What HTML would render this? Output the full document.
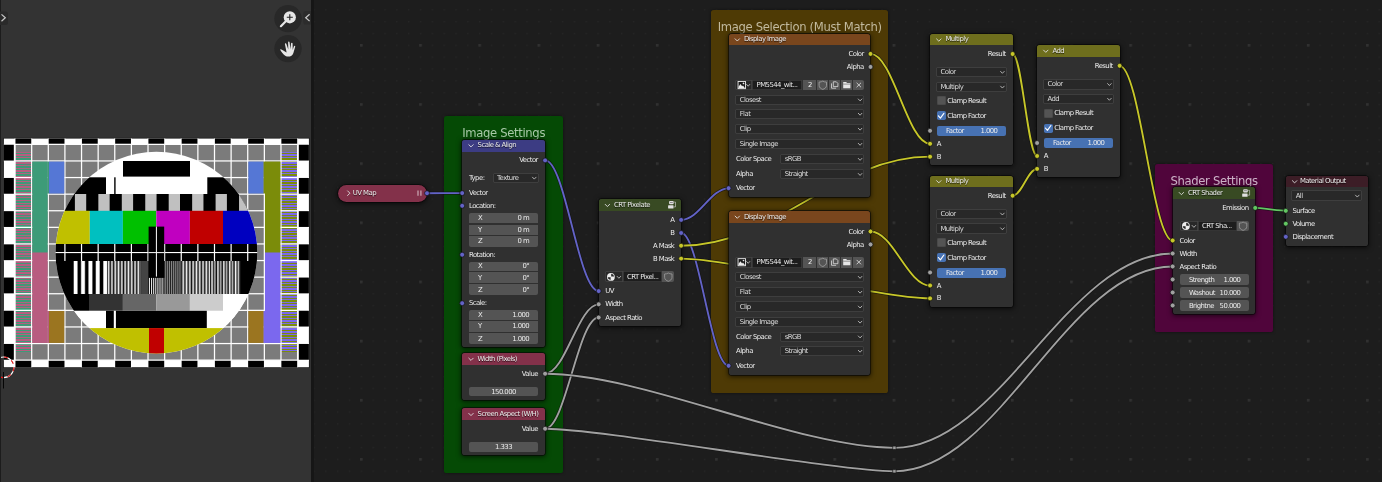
<!DOCTYPE html>
<html><head><meta charset="utf-8"><title>Node Editor</title><style>
html,body{margin:0;padding:0;}
body{width:1382px;height:482px;overflow:hidden;background:#1d1d1d;font-family:"DejaVu Sans","Liberation Sans",sans-serif;}
#root{position:relative;width:1382px;height:482px;overflow:hidden;background:#1d1d1d;}
.t{position:absolute;line-height:10px;white-space:nowrap;}
.b{position:absolute;box-sizing:border-box;}
.n{position:absolute;background:#303030;border-radius:2.6px;box-shadow:0 1px 5px 1px rgba(0,0,0,.62),0 0 0 0.7px rgba(10,10,10,.8);overflow:hidden;}
.h{position:absolute;left:0;top:0;right:0;}
.f{position:absolute;border-radius:2.6px;box-shadow:0 0 3px rgba(0,0,0,.5);}
svg.l{position:absolute;left:0;top:0;}
#nl,#fl{position:absolute;left:0;top:0;width:1382px;height:482px;will-change:transform;}
#left{position:absolute;left:0;top:0;width:311px;height:482px;background:#333333;}
</style></head><body><div id="root">
<svg class="l" width="1382" height="482"><defs>
<pattern id="gm" x="360.65" y="162.95" width="11.836" height="11.83" patternUnits="userSpaceOnUse"><rect width="1.3" height="1.3" fill="#262626"/></pattern>
<pattern id="gM" x="360.00" y="162.30" width="59.18" height="59.15" patternUnits="userSpaceOnUse"><rect width="2.6" height="2.6" fill="#313131"/></pattern>
</defs><rect width="1382" height="482" fill="url(#gm)"/><rect width="1382" height="482" fill="url(#gM)"/></svg>
<div id="fl"><div class="f" style="left:444.30px;top:116.00px;width:118.70px;height:356.70px;background:#054a05;"></div><span class="t" style="left:444.30px;width:118.70px;text-align:center;top:126.20px;line-height:14px;font-size:11.6px;letter-spacing:-0.33px;color:#a9c9a9;">Image Settings</span><div class="f" style="left:711.00px;top:9.60px;width:177.40px;height:383.10px;background:#4e3a05;"></div><span class="t" style="left:711.00px;width:177.40px;text-align:center;top:19.80px;line-height:14px;font-size:11.6px;letter-spacing:-0.33px;color:#c2ba9f;">Image Selection (Must Match)</span><div class="f" style="left:1155.10px;top:163.90px;width:118.10px;height:167.70px;background:#50053b;"></div><span class="t" style="left:1155.10px;width:118.10px;text-align:center;top:173.60px;line-height:14px;font-size:11.6px;letter-spacing:-0.33px;color:#cdb3c8;">Shader Settings</span></div>
<svg class="l" width="1382" height="482"><path d="M427.00 193.20 C427.13 193.20 462.07 193.10 462.20 193.10" stroke="#111" stroke-width="3.2" fill="none" opacity="0.7"/><path d="M427.00 193.20 C427.13 193.20 462.07 193.10 462.20 193.10" stroke="#6363c7" stroke-width="1.85" fill="none"/><path d="M545.10 160.40 C565.47 160.40 578.33 291.10 598.70 291.10" stroke="#111" stroke-width="3.2" fill="none" opacity="0.7"/><path d="M545.10 160.40 C565.47 160.40 578.33 291.10 598.70 291.10" stroke="#6363c7" stroke-width="1.85" fill="none"/><path d="M681.10 219.90 C699.15 219.90 710.55 188.30 728.60 188.30" stroke="#111" stroke-width="3.2" fill="none" opacity="0.7"/><path d="M681.10 219.90 C699.15 219.90 710.55 188.30 728.60 188.30" stroke="#6363c7" stroke-width="1.85" fill="none"/><path d="M681.10 233.00 C699.15 233.00 710.55 365.60 728.60 365.60" stroke="#111" stroke-width="3.2" fill="none" opacity="0.7"/><path d="M681.10 233.00 C699.15 233.00 710.55 365.60 728.60 365.60" stroke="#6363c7" stroke-width="1.85" fill="none"/><path d="M681.10 245.70 C775.72 245.70 835.48 156.70 930.10 156.70" stroke="#111" stroke-width="3.2" fill="none" opacity="0.7"/><path d="M681.10 245.70 C775.72 245.70 835.48 156.70 930.10 156.70" stroke="#c7c729" stroke-width="1.85" fill="none"/><path d="M681.10 258.60 C734.03 258.60 877.17 298.40 930.10 298.40" stroke="#111" stroke-width="3.2" fill="none" opacity="0.7"/><path d="M681.10 258.60 C734.03 258.60 877.17 298.40 930.10 298.40" stroke="#c7c729" stroke-width="1.85" fill="none"/><path d="M870.50 53.90 C893.15 53.90 907.45 143.80 930.10 143.80" stroke="#111" stroke-width="3.2" fill="none" opacity="0.7"/><path d="M870.50 53.90 C893.15 53.90 907.45 143.80 930.10 143.80" stroke="#c7c729" stroke-width="1.85" fill="none"/><path d="M870.50 231.50 C893.15 231.50 907.45 285.50 930.10 285.50" stroke="#111" stroke-width="3.2" fill="none" opacity="0.7"/><path d="M870.50 231.50 C893.15 231.50 907.45 285.50 930.10 285.50" stroke="#c7c729" stroke-width="1.85" fill="none"/><path d="M1012.60 54.00 C1021.91 54.00 1027.79 156.00 1037.10 156.00" stroke="#111" stroke-width="3.2" fill="none" opacity="0.7"/><path d="M1012.60 54.00 C1021.91 54.00 1027.79 156.00 1037.10 156.00" stroke="#c7c729" stroke-width="1.85" fill="none"/><path d="M1012.60 195.70 C1021.91 195.70 1027.79 168.90 1037.10 168.90" stroke="#111" stroke-width="3.2" fill="none" opacity="0.7"/><path d="M1012.60 195.70 C1021.91 195.70 1027.79 168.90 1037.10 168.90" stroke="#c7c729" stroke-width="1.85" fill="none"/><path d="M1119.60 65.80 C1139.78 65.80 1152.52 240.50 1172.70 240.50" stroke="#111" stroke-width="3.2" fill="none" opacity="0.7"/><path d="M1119.60 65.80 C1139.78 65.80 1152.52 240.50 1172.70 240.50" stroke="#c7c729" stroke-width="1.85" fill="none"/><path d="M1255.20 207.90 C1259.06 207.90 1281.94 210.80 1285.80 210.80" stroke="#111" stroke-width="3.2" fill="none" opacity="0.7"/><path d="M1255.20 207.90 C1259.06 207.90 1281.94 210.80 1285.80 210.80" stroke="#63c763" stroke-width="1.85" fill="none"/><path d="M545.10 373.70 C565.47 373.70 578.33 304.30 598.70 304.30" stroke="#111" stroke-width="3.2" fill="none" opacity="0.7"/><path d="M545.10 373.70 C565.47 373.70 578.33 304.30 598.70 304.30" stroke="#a1a1a1" stroke-width="1.85" fill="none"/><path d="M545.10 428.70 C565.47 428.70 578.33 317.50 598.70 317.50" stroke="#111" stroke-width="3.2" fill="none" opacity="0.7"/><path d="M545.10 428.70 C565.47 428.70 578.33 317.50 598.70 317.50" stroke="#a1a1a1" stroke-width="1.85" fill="none"/><path d="M545.10 373.70 C643.65 373.70 795.85 447.80 894.40 447.80" stroke="#111" stroke-width="3.2" fill="none" opacity="0.7"/><path d="M545.10 373.70 C643.65 373.70 795.85 447.80 894.40 447.80" stroke="#a1a1a1" stroke-width="1.85" fill="none"/><path d="M894.40 447.80 C1000.15 447.80 1066.95 253.50 1172.70 253.50" stroke="#111" stroke-width="3.2" fill="none" opacity="0.7"/><path d="M894.40 447.80 C1000.15 447.80 1066.95 253.50 1172.70 253.50" stroke="#a1a1a1" stroke-width="1.85" fill="none"/><path d="M545.10 428.70 C601.76 428.70 837.74 471.30 894.40 471.30" stroke="#111" stroke-width="3.2" fill="none" opacity="0.7"/><path d="M545.10 428.70 C601.76 428.70 837.74 471.30 894.40 471.30" stroke="#a1a1a1" stroke-width="1.85" fill="none"/><path d="M894.40 471.30 C1000.15 471.30 1066.95 266.50 1172.70 266.50" stroke="#111" stroke-width="3.2" fill="none" opacity="0.7"/><path d="M894.40 471.30 C1000.15 471.30 1066.95 266.50 1172.70 266.50" stroke="#a1a1a1" stroke-width="1.85" fill="none"/></svg>
 <div id="nl"><div class="n" style="left:337.8px;top:184.9px;width:89.2px;height:16.8px;border-radius:8.4px;background:#83314a;"></div><span class="t" style="top:188.00px;font-size:6.9px;letter-spacing:-0.55px;color:#ececec;text-shadow:0 0.6px 0.8px rgba(0,0,0,.7);left:352.80px;">UV Map</span><div class="n" style="left:462.40px;top:139.50px;width:82.70px;height:207.50px;"><div class="h" style="height:12px;background:#3c3c83;"></div></div><span class="t" style="top:140.10px;font-size:6.9px;letter-spacing:-0.55px;color:#ececec;text-shadow:0 0.6px 0.8px rgba(0,0,0,.7);left:477.60px;">Scale &amp; Align</span><span class="t" style="top:155.40px;font-size:6.9px;letter-spacing:-0.55px;color:#ececec;right:844.10px;">Vector</span><span class="t" style="top:172.80px;font-size:6.9px;letter-spacing:-0.55px;color:#ececec;left:469.00px;">Type:</span><div class="b" style="left:492.80px;top:172.50px;width:45.80px;height:10.70px;background:#282828;border-radius:2.2px;box-shadow:inset 0 0 0 0.8px #454545;"></div><span class="t" style="top:172.85px;font-size:6.9px;letter-spacing:-0.55px;color:#dddddd;left:497.10px;">Texture</span><span class="t" style="top:188.00px;font-size:6.9px;letter-spacing:-0.55px;color:#ececec;left:469.00px;">Vector</span><span class="t" style="top:200.80px;font-size:6.9px;letter-spacing:-0.55px;color:#ececec;left:469.00px;">Location:</span><div class="b" style="left:468.70px;top:212.90px;width:69.70px;height:10.00px;background:#545454;border-radius:2px 2px 0 0;"></div><span class="t" style="top:212.90px;font-size:6.9px;letter-spacing:-0.55px;color:#ececec;left:477.90px;">X</span><span class="t" style="top:212.90px;font-size:6.9px;letter-spacing:-0.55px;color:#ececec;right:852.80px;">0 m</span><div class="b" style="left:468.70px;top:224.60px;width:69.70px;height:10.20px;background:#545454;border-radius:0;"></div><span class="t" style="top:224.70px;font-size:6.9px;letter-spacing:-0.55px;color:#ececec;left:477.90px;">Y</span><span class="t" style="top:224.70px;font-size:6.9px;letter-spacing:-0.55px;color:#ececec;right:852.80px;">0 m</span><div class="b" style="left:468.70px;top:236.20px;width:69.70px;height:10.50px;background:#545454;border-radius:0 0 2px 2px;"></div><span class="t" style="top:236.45px;font-size:6.9px;letter-spacing:-0.55px;color:#ececec;left:477.90px;">Z</span><span class="t" style="top:236.45px;font-size:6.9px;letter-spacing:-0.55px;color:#ececec;right:852.80px;">0 m</span><span class="t" style="top:249.70px;font-size:6.9px;letter-spacing:-0.55px;color:#ececec;left:469.00px;">Rotation:</span><div class="b" style="left:468.70px;top:261.80px;width:69.70px;height:9.10px;background:#545454;border-radius:2px 2px 0 0;"></div><span class="t" style="top:261.35px;font-size:6.9px;letter-spacing:-0.55px;color:#ececec;left:477.90px;">X</span><span class="t" style="top:261.35px;font-size:6.9px;letter-spacing:-0.55px;color:#ececec;right:852.80px;">0°</span><div class="b" style="left:468.70px;top:272.40px;width:69.70px;height:10.50px;background:#545454;border-radius:0;"></div><span class="t" style="top:272.65px;font-size:6.9px;letter-spacing:-0.55px;color:#ececec;left:477.90px;">Y</span><span class="t" style="top:272.65px;font-size:6.9px;letter-spacing:-0.55px;color:#ececec;right:852.80px;">0°</span><div class="b" style="left:468.70px;top:284.30px;width:69.70px;height:11.00px;background:#545454;border-radius:0 0 2px 2px;"></div><span class="t" style="top:284.80px;font-size:6.9px;letter-spacing:-0.55px;color:#ececec;left:477.90px;">Z</span><span class="t" style="top:284.80px;font-size:6.9px;letter-spacing:-0.55px;color:#ececec;right:852.80px;">0°</span><span class="t" style="top:298.20px;font-size:6.9px;letter-spacing:-0.55px;color:#ececec;left:469.00px;">Scale:</span><div class="b" style="left:468.70px;top:309.70px;width:69.70px;height:9.90px;background:#545454;border-radius:2px 2px 0 0;"></div><span class="t" style="top:309.65px;font-size:6.9px;letter-spacing:-0.55px;color:#ececec;left:477.90px;">X</span><span class="t" style="top:309.65px;font-size:6.9px;letter-spacing:-0.55px;color:#ececec;right:852.80px;">1.000</span><div class="b" style="left:468.70px;top:321.00px;width:69.70px;height:10.70px;background:#545454;border-radius:0;"></div><span class="t" style="top:321.35px;font-size:6.9px;letter-spacing:-0.55px;color:#ececec;left:477.90px;">Y</span><span class="t" style="top:321.35px;font-size:6.9px;letter-spacing:-0.55px;color:#ececec;right:852.80px;">1.000</span><div class="b" style="left:468.70px;top:333.00px;width:69.70px;height:11.20px;background:#545454;border-radius:0 0 2px 2px;"></div><span class="t" style="top:333.60px;font-size:6.9px;letter-spacing:-0.55px;color:#ececec;left:477.90px;">Z</span><span class="t" style="top:333.60px;font-size:6.9px;letter-spacing:-0.55px;color:#ececec;right:852.80px;">1.000</span><div class="n" style="left:462.40px;top:352.80px;width:82.70px;height:47.30px;"><div class="h" style="height:12.4px;background:#83314a;"></div></div><span class="t" style="top:353.60px;font-size:6.9px;letter-spacing:-0.55px;color:#ececec;text-shadow:0 0.6px 0.8px rgba(0,0,0,.7);left:477.60px;">Width (Pixels)</span><span class="t" style="top:368.70px;font-size:6.9px;letter-spacing:-0.55px;color:#ececec;right:844.10px;">Value</span><div class="b" style="left:468.70px;top:386.80px;width:69.70px;height:9.60px;background:#545454;border-radius:2px;"></div><span class="t" style="top:386.60px;font-size:6.9px;letter-spacing:-0.55px;color:#ececec;left:403.55px;width:200px;text-align:center;">150.000</span><div class="n" style="left:462.40px;top:408.10px;width:82.70px;height:46.70px;"><div class="h" style="height:12.2px;background:#83314a;"></div></div><span class="t" style="top:408.80px;font-size:6.9px;letter-spacing:-0.55px;color:#ececec;text-shadow:0 0.6px 0.8px rgba(0,0,0,.7);left:477.60px;">Screen Aspect (W/H)</span><span class="t" style="top:423.70px;font-size:6.9px;letter-spacing:-0.55px;color:#ececec;right:844.10px;">Value</span><div class="b" style="left:468.70px;top:441.80px;width:69.70px;height:10.20px;background:#545454;border-radius:2px;"></div><span class="t" style="top:441.90px;font-size:6.9px;letter-spacing:-0.55px;color:#ececec;left:403.55px;width:200px;text-align:center;">1.333</span><div class="n" style="left:598.80px;top:199.10px;width:82.30px;height:126.50px;"><div class="h" style="height:12.1px;background:#384a23;"></div></div><span class="t" style="top:199.75px;font-size:6.9px;letter-spacing:-0.55px;color:#ececec;text-shadow:0 0.6px 0.8px rgba(0,0,0,.7);left:614.00px;">CRT Pixelate</span><span class="t" style="top:214.90px;font-size:6.9px;letter-spacing:-0.55px;color:#ececec;right:707.70px;">A</span><span class="t" style="top:228.00px;font-size:6.9px;letter-spacing:-0.55px;color:#ececec;right:707.70px;">B</span><span class="t" style="top:240.70px;font-size:6.9px;letter-spacing:-0.55px;color:#ececec;right:707.70px;">A Mask</span><span class="t" style="top:253.60px;font-size:6.9px;letter-spacing:-0.55px;color:#ececec;right:707.70px;">B Mask</span><div class="b" style="left:604.90px;top:271.40px;width:17.90px;height:11.00px;background:#282828;border-radius:2px 0 0 2px;box-shadow:inset 0 0 0 0.8px #454545;"></div><div class="b" style="left:623.10px;top:271.40px;width:39.00px;height:11.00px;background:#1d1d1d;border-radius:0;box-shadow:inset 0 0 0 0.8px #3d3d3d;"></div><div class="b" style="left:662.40px;top:271.40px;width:11.80px;height:11.00px;background:#545454;border-radius:0 2px 2px 0;"></div><span class="t" style="top:271.90px;font-size:6.9px;letter-spacing:-0.55px;color:#ececec;left:627.00px;">CRT Pixel...</span><span class="t" style="top:286.10px;font-size:6.9px;letter-spacing:-0.55px;color:#ececec;left:605.30px;">UV</span><span class="t" style="top:299.30px;font-size:6.9px;letter-spacing:-0.55px;color:#ececec;left:605.30px;">Width</span><span class="t" style="top:312.50px;font-size:6.9px;letter-spacing:-0.55px;color:#ececec;left:605.30px;">Aspect Ratio</span><div class="n" style="left:728.70px;top:33.80px;width:141.80px;height:163.50px;"><div class="h" style="height:11.6px;background:#79461d;"></div></div><span class="t" style="top:34.20px;font-size:6.9px;letter-spacing:-0.55px;color:#ececec;text-shadow:0 0.6px 0.8px rgba(0,0,0,.7);left:743.90px;">Display Image</span><span class="t" style="top:48.90px;font-size:6.9px;letter-spacing:-0.55px;color:#ececec;right:518.30px;">Color</span><span class="t" style="top:61.90px;font-size:6.9px;letter-spacing:-0.55px;color:#ececec;right:518.30px;">Alpha</span><div class="b" style="left:735.40px;top:79.60px;width:16.60px;height:10.80px;background:#282828;border-radius:2px 0 0 2px;box-shadow:inset 0 0 0 0.8px #454545;"></div><div class="b" style="left:752.40px;top:79.60px;width:50.00px;height:10.80px;background:#1d1d1d;border-radius:0;box-shadow:inset 0 0 0 0.8px #3d3d3d;"></div><span class="t" style="top:80.00px;font-size:6.9px;letter-spacing:-0.55px;color:#ececec;left:756.60px;">PM5544_wit...</span><div class="b" style="left:803.00px;top:79.60px;width:13.00px;height:10.80px;background:#545454;border-radius:0;"></div><div class="b" style="left:817.00px;top:79.60px;width:11.00px;height:10.80px;background:#545454;border-radius:0;"></div><div class="b" style="left:829.00px;top:79.60px;width:11.00px;height:10.80px;background:#545454;border-radius:0;"></div><div class="b" style="left:841.00px;top:79.60px;width:11.00px;height:10.80px;background:#545454;border-radius:0;"></div><div class="b" style="left:853.00px;top:79.60px;width:11.00px;height:10.80px;background:#545454;border-radius:0 2px 2px 0;"></div><span class="t" style="top:80.00px;font-size:6.9px;letter-spacing:-0.55px;color:#ececec;left:709.80px;width:200px;text-align:center;">2</span><div class="b" style="left:735.40px;top:94.60px;width:129.00px;height:10.10px;background:#282828;border-radius:2.2px;box-shadow:inset 0 0 0 0.8px #454545;"></div><span class="t" style="top:94.65px;font-size:6.9px;letter-spacing:-0.55px;color:#dddddd;left:739.70px;">Closest</span><div class="b" style="left:735.40px;top:108.70px;width:129.00px;height:10.50px;background:#282828;border-radius:2.2px;box-shadow:inset 0 0 0 0.8px #454545;"></div><span class="t" style="top:108.95px;font-size:6.9px;letter-spacing:-0.55px;color:#dddddd;left:739.70px;">Flat</span><div class="b" style="left:735.40px;top:123.80px;width:129.00px;height:10.20px;background:#282828;border-radius:2.2px;box-shadow:inset 0 0 0 0.8px #454545;"></div><span class="t" style="top:123.90px;font-size:6.9px;letter-spacing:-0.55px;color:#dddddd;left:739.70px;">Clip</span><div class="b" style="left:735.40px;top:138.60px;width:129.00px;height:10.80px;background:#282828;border-radius:2.2px;box-shadow:inset 0 0 0 0.8px #454545;"></div><span class="t" style="top:139.00px;font-size:6.9px;letter-spacing:-0.55px;color:#dddddd;left:739.70px;">Single Image</span><span class="t" style="top:154.05px;font-size:6.9px;letter-spacing:-0.55px;color:#ececec;left:736.00px;">Color Space</span><div class="b" style="left:780.40px;top:153.90px;width:84.00px;height:10.30px;background:#282828;border-radius:2.2px;box-shadow:inset 0 0 0 0.8px #454545;"></div><span class="t" style="top:154.05px;font-size:6.9px;letter-spacing:-0.55px;color:#dddddd;left:784.70px;">sRGB</span><span class="t" style="top:169.15px;font-size:6.9px;letter-spacing:-0.55px;color:#ececec;left:736.00px;">Alpha</span><div class="b" style="left:780.40px;top:168.80px;width:84.00px;height:10.70px;background:#282828;border-radius:2.2px;box-shadow:inset 0 0 0 0.8px #454545;"></div><span class="t" style="top:169.15px;font-size:6.9px;letter-spacing:-0.55px;color:#dddddd;left:784.70px;">Straight</span><span class="t" style="top:183.20px;font-size:6.9px;letter-spacing:-0.55px;color:#ececec;left:736.00px;">Vector</span><div class="n" style="left:728.70px;top:211.10px;width:141.80px;height:163.50px;"><div class="h" style="height:11.6px;background:#79461d;"></div></div><span class="t" style="top:211.50px;font-size:6.9px;letter-spacing:-0.55px;color:#ececec;text-shadow:0 0.6px 0.8px rgba(0,0,0,.7);left:743.90px;">Display Image</span><span class="t" style="top:226.50px;font-size:6.9px;letter-spacing:-0.55px;color:#ececec;right:518.30px;">Color</span><span class="t" style="top:239.50px;font-size:6.9px;letter-spacing:-0.55px;color:#ececec;right:518.30px;">Alpha</span><div class="b" style="left:735.40px;top:256.60px;width:16.60px;height:11.00px;background:#282828;border-radius:2px 0 0 2px;box-shadow:inset 0 0 0 0.8px #454545;"></div><div class="b" style="left:752.40px;top:256.60px;width:50.00px;height:11.00px;background:#1d1d1d;border-radius:0;box-shadow:inset 0 0 0 0.8px #3d3d3d;"></div><span class="t" style="top:257.10px;font-size:6.9px;letter-spacing:-0.55px;color:#ececec;left:756.60px;">PM5544_wit...</span><div class="b" style="left:803.00px;top:256.60px;width:13.00px;height:11.00px;background:#545454;border-radius:0;"></div><div class="b" style="left:817.00px;top:256.60px;width:11.00px;height:11.00px;background:#545454;border-radius:0;"></div><div class="b" style="left:829.00px;top:256.60px;width:11.00px;height:11.00px;background:#545454;border-radius:0;"></div><div class="b" style="left:841.00px;top:256.60px;width:11.00px;height:11.00px;background:#545454;border-radius:0;"></div><div class="b" style="left:853.00px;top:256.60px;width:11.00px;height:11.00px;background:#545454;border-radius:0 2px 2px 0;"></div><span class="t" style="top:257.10px;font-size:6.9px;letter-spacing:-0.55px;color:#ececec;left:709.80px;width:200px;text-align:center;">2</span><div class="b" style="left:735.40px;top:271.90px;width:129.00px;height:10.30px;background:#282828;border-radius:2.2px;box-shadow:inset 0 0 0 0.8px #454545;"></div><span class="t" style="top:272.05px;font-size:6.9px;letter-spacing:-0.55px;color:#dddddd;left:739.70px;">Closest</span><div class="b" style="left:735.40px;top:286.80px;width:129.00px;height:10.20px;background:#282828;border-radius:2.2px;box-shadow:inset 0 0 0 0.8px #454545;"></div><span class="t" style="top:286.90px;font-size:6.9px;letter-spacing:-0.55px;color:#dddddd;left:739.70px;">Flat</span><div class="b" style="left:735.40px;top:301.40px;width:129.00px;height:10.70px;background:#282828;border-radius:2.2px;box-shadow:inset 0 0 0 0.8px #454545;"></div><span class="t" style="top:301.75px;font-size:6.9px;letter-spacing:-0.55px;color:#dddddd;left:739.70px;">Clip</span><div class="b" style="left:735.40px;top:316.70px;width:129.00px;height:10.30px;background:#282828;border-radius:2.2px;box-shadow:inset 0 0 0 0.8px #454545;"></div><span class="t" style="top:316.85px;font-size:6.9px;letter-spacing:-0.55px;color:#dddddd;left:739.70px;">Single Image</span><span class="t" style="top:331.65px;font-size:6.9px;letter-spacing:-0.55px;color:#ececec;left:736.00px;">Color Space</span><div class="b" style="left:780.40px;top:331.50px;width:84.00px;height:10.30px;background:#282828;border-radius:2.2px;box-shadow:inset 0 0 0 0.8px #454545;"></div><span class="t" style="top:331.65px;font-size:6.9px;letter-spacing:-0.55px;color:#dddddd;left:784.70px;">sRGB</span><span class="t" style="top:345.95px;font-size:6.9px;letter-spacing:-0.55px;color:#ececec;left:736.00px;">Alpha</span><div class="b" style="left:780.40px;top:345.70px;width:84.00px;height:10.50px;background:#282828;border-radius:2.2px;box-shadow:inset 0 0 0 0.8px #454545;"></div><span class="t" style="top:345.95px;font-size:6.9px;letter-spacing:-0.55px;color:#dddddd;left:784.70px;">Straight</span><span class="t" style="top:360.80px;font-size:6.9px;letter-spacing:-0.55px;color:#ececec;left:736.00px;">Vector</span><div class="n" style="left:930.20px;top:34.10px;width:82.40px;height:131.20px;"><div class="h" style="height:11.3px;background:#6e6e1d;"></div></div><span class="t" style="top:34.35px;font-size:6.9px;letter-spacing:-0.55px;color:#ececec;text-shadow:0 0.6px 0.8px rgba(0,0,0,.7);left:945.40px;">Multiply</span><span class="t" style="top:49.00px;font-size:6.9px;letter-spacing:-0.55px;color:#ececec;right:376.30px;">Result</span><div class="b" style="left:936.10px;top:66.80px;width:70.60px;height:10.50px;background:#282828;border-radius:2.2px;box-shadow:inset 0 0 0 0.8px #454545;"></div><span class="t" style="top:67.05px;font-size:6.9px;letter-spacing:-0.55px;color:#dddddd;left:940.40px;">Color</span><div class="b" style="left:936.10px;top:81.70px;width:70.60px;height:10.20px;background:#282828;border-radius:2.2px;box-shadow:inset 0 0 0 0.8px #454545;"></div><span class="t" style="top:81.80px;font-size:6.9px;letter-spacing:-0.55px;color:#dddddd;left:940.40px;">Multiply</span><div class="b" style="left:936.50px;top:96.40px;width:9.00px;height:9.00px;background:#545454;border-radius:1.8px;box-shadow:inset 0 0 0 0.8px #484848;"></div><span class="t" style="top:96.00px;font-size:6.9px;letter-spacing:-0.55px;color:#ececec;left:947.20px;">Clamp Result</span><div class="b" style="left:936.50px;top:111.30px;width:9.00px;height:9.00px;background:#4772b3;border-radius:1.8px;"></div><span class="t" style="top:110.90px;font-size:6.9px;letter-spacing:-0.55px;color:#ececec;left:947.20px;">Clamp Factor</span><div class="b" style="left:936.50px;top:126.10px;width:69.80px;height:9.90px;background:#4772b3;border-radius:2px;"></div><span class="t" style="top:126.05px;font-size:6.9px;letter-spacing:-0.55px;color:#ececec;left:946.10px;">Factor</span><span class="t" style="top:126.05px;font-size:6.9px;letter-spacing:-0.55px;color:#ececec;right:384.60px;">1.000</span><span class="t" style="top:138.80px;font-size:6.9px;letter-spacing:-0.55px;color:#ececec;left:936.80px;">A</span><span class="t" style="top:151.70px;font-size:6.9px;letter-spacing:-0.55px;color:#ececec;left:936.80px;">B</span><div class="n" style="left:930.20px;top:175.80px;width:82.40px;height:131.20px;"><div class="h" style="height:11.3px;background:#6e6e1d;"></div></div><span class="t" style="top:176.05px;font-size:6.9px;letter-spacing:-0.55px;color:#ececec;text-shadow:0 0.6px 0.8px rgba(0,0,0,.7);left:945.40px;">Multiply</span><span class="t" style="top:190.70px;font-size:6.9px;letter-spacing:-0.55px;color:#ececec;right:376.30px;">Result</span><div class="b" style="left:936.10px;top:208.50px;width:70.60px;height:10.50px;background:#282828;border-radius:2.2px;box-shadow:inset 0 0 0 0.8px #454545;"></div><span class="t" style="top:208.75px;font-size:6.9px;letter-spacing:-0.55px;color:#dddddd;left:940.40px;">Color</span><div class="b" style="left:936.10px;top:223.40px;width:70.60px;height:10.20px;background:#282828;border-radius:2.2px;box-shadow:inset 0 0 0 0.8px #454545;"></div><span class="t" style="top:223.50px;font-size:6.9px;letter-spacing:-0.55px;color:#dddddd;left:940.40px;">Multiply</span><div class="b" style="left:936.50px;top:238.10px;width:9.00px;height:9.00px;background:#545454;border-radius:1.8px;box-shadow:inset 0 0 0 0.8px #484848;"></div><span class="t" style="top:237.70px;font-size:6.9px;letter-spacing:-0.55px;color:#ececec;left:947.20px;">Clamp Result</span><div class="b" style="left:936.50px;top:253.00px;width:9.00px;height:9.00px;background:#4772b3;border-radius:1.8px;"></div><span class="t" style="top:252.60px;font-size:6.9px;letter-spacing:-0.55px;color:#ececec;left:947.20px;">Clamp Factor</span><div class="b" style="left:936.50px;top:267.80px;width:69.80px;height:9.90px;background:#4772b3;border-radius:2px;"></div><span class="t" style="top:267.75px;font-size:6.9px;letter-spacing:-0.55px;color:#ececec;left:946.10px;">Factor</span><span class="t" style="top:267.75px;font-size:6.9px;letter-spacing:-0.55px;color:#ececec;right:384.60px;">1.000</span><span class="t" style="top:280.50px;font-size:6.9px;letter-spacing:-0.55px;color:#ececec;left:936.80px;">A</span><span class="t" style="top:293.40px;font-size:6.9px;letter-spacing:-0.55px;color:#ececec;left:936.80px;">B</span><div class="n" style="left:1037.20px;top:45.30px;width:82.40px;height:132.20px;"><div class="h" style="height:11.3px;background:#6e6e1d;"></div></div><span class="t" style="top:45.55px;font-size:6.9px;letter-spacing:-0.55px;color:#ececec;text-shadow:0 0.6px 0.8px rgba(0,0,0,.7);left:1052.40px;">Add</span><span class="t" style="top:60.80px;font-size:6.9px;letter-spacing:-0.55px;color:#ececec;right:269.30px;">Result</span><div class="b" style="left:1043.10px;top:79.00px;width:70.60px;height:10.50px;background:#282828;border-radius:2.2px;box-shadow:inset 0 0 0 0.8px #454545;"></div><span class="t" style="top:79.25px;font-size:6.9px;letter-spacing:-0.55px;color:#dddddd;left:1047.40px;">Color</span><div class="b" style="left:1043.10px;top:93.90px;width:70.60px;height:10.20px;background:#282828;border-radius:2.2px;box-shadow:inset 0 0 0 0.8px #454545;"></div><span class="t" style="top:94.00px;font-size:6.9px;letter-spacing:-0.55px;color:#dddddd;left:1047.40px;">Add</span><div class="b" style="left:1043.50px;top:108.60px;width:9.00px;height:9.00px;background:#545454;border-radius:1.8px;box-shadow:inset 0 0 0 0.8px #484848;"></div><span class="t" style="top:108.20px;font-size:6.9px;letter-spacing:-0.55px;color:#ececec;left:1054.20px;">Clamp Result</span><div class="b" style="left:1043.50px;top:123.50px;width:9.00px;height:9.00px;background:#4772b3;border-radius:1.8px;"></div><span class="t" style="top:123.10px;font-size:6.9px;letter-spacing:-0.55px;color:#ececec;left:1054.20px;">Clamp Factor</span><div class="b" style="left:1043.50px;top:138.30px;width:69.80px;height:9.90px;background:#4772b3;border-radius:2px;"></div><span class="t" style="top:138.25px;font-size:6.9px;letter-spacing:-0.55px;color:#ececec;left:1053.10px;">Factor</span><span class="t" style="top:138.25px;font-size:6.9px;letter-spacing:-0.55px;color:#ececec;right:277.60px;">1.000</span><span class="t" style="top:151.00px;font-size:6.9px;letter-spacing:-0.55px;color:#ececec;left:1043.80px;">A</span><span class="t" style="top:163.90px;font-size:6.9px;letter-spacing:-0.55px;color:#ececec;left:1043.80px;">B</span><div class="n" style="left:1172.80px;top:187.40px;width:82.40px;height:126.70px;"><div class="h" style="height:11.8px;background:#384a23;"></div></div><span class="t" style="top:187.90px;font-size:6.9px;letter-spacing:-0.55px;color:#ececec;text-shadow:0 0.6px 0.8px rgba(0,0,0,.7);left:1188.00px;">CRT Shader</span><span class="t" style="top:202.90px;font-size:6.9px;letter-spacing:-0.55px;color:#ececec;right:133.50px;">Emission</span><div class="b" style="left:1179.90px;top:220.60px;width:17.90px;height:10.80px;background:#282828;border-radius:2px 0 0 2px;box-shadow:inset 0 0 0 0.8px #454545;"></div><div class="b" style="left:1198.10px;top:220.60px;width:38.80px;height:10.80px;background:#1d1d1d;border-radius:0;box-shadow:inset 0 0 0 0.8px #3d3d3d;"></div><div class="b" style="left:1237.20px;top:220.60px;width:11.80px;height:10.80px;background:#545454;border-radius:0 2px 2px 0;"></div><span class="t" style="top:221.00px;font-size:6.9px;letter-spacing:-0.55px;color:#ececec;left:1202.00px;">CRT Sha...</span><span class="t" style="top:235.50px;font-size:6.9px;letter-spacing:-0.55px;color:#ececec;left:1179.60px;">Color</span><span class="t" style="top:248.50px;font-size:6.9px;letter-spacing:-0.55px;color:#ececec;left:1179.60px;">Width</span><span class="t" style="top:261.50px;font-size:6.9px;letter-spacing:-0.55px;color:#ececec;left:1179.60px;">Aspect Ratio</span><div class="b" style="left:1180.00px;top:274.40px;width:69.10px;height:11.00px;background:#545454;border-radius:2px;"></div><span class="t" style="top:274.90px;font-size:6.9px;letter-spacing:-0.55px;color:#ececec;left:1188.90px;">Strength</span><span class="t" style="top:274.90px;font-size:6.9px;letter-spacing:-0.55px;color:#ececec;right:141.60px;">1.000</span><div class="b" style="left:1180.00px;top:287.40px;width:69.10px;height:11.00px;background:#545454;border-radius:2px;"></div><span class="t" style="top:287.90px;font-size:6.9px;letter-spacing:-0.55px;color:#ececec;left:1188.90px;">Washout</span><span class="t" style="top:287.90px;font-size:6.9px;letter-spacing:-0.55px;color:#ececec;right:141.60px;">10.000</span><div class="b" style="left:1180.00px;top:300.40px;width:69.10px;height:11.00px;background:#545454;border-radius:2px;"></div><span class="t" style="top:300.90px;font-size:6.9px;letter-spacing:-0.55px;color:#ececec;left:1188.90px;">Brightne</span><span class="t" style="top:300.90px;font-size:6.9px;letter-spacing:-0.55px;color:#ececec;right:141.60px;">50.000</span><div class="n" style="left:1286.00px;top:175.70px;width:82.40px;height:70.80px;"><div class="h" style="height:11.6px;background:#3c1d26;"></div></div><span class="t" style="top:176.10px;font-size:6.9px;letter-spacing:-0.55px;color:#ececec;text-shadow:0 0.6px 0.8px rgba(0,0,0,.7);left:1299.90px;">Material Output</span><div class="b" style="left:1291.40px;top:190.30px;width:70.20px;height:11.00px;background:#282828;border-radius:2.2px;box-shadow:inset 0 0 0 0.8px #454545;"></div><span class="t" style="top:190.80px;font-size:6.9px;letter-spacing:-0.55px;color:#dddddd;left:1295.70px;">All</span><span class="t" style="top:205.80px;font-size:6.9px;letter-spacing:-0.55px;color:#ececec;left:1292.40px;">Surface</span><span class="t" style="top:218.70px;font-size:6.9px;letter-spacing:-0.55px;color:#ececec;left:1292.40px;">Volume</span><span class="t" style="top:231.80px;font-size:6.9px;letter-spacing:-0.55px;color:#ececec;left:1292.40px;">Displacement</span></div>
<svg class="l" width="1382" height="482"><path d="M347.6 190.9 L349.9 193.2 L347.6 195.5" fill="none" stroke="#e0e0e0" stroke-width="0.9" stroke-linecap="round" stroke-linejoin="round"/><path d="M418.0 190.6V195.8M420.9 190.6V195.8" stroke="#c199a6" stroke-width="1.4"/><path d="M468.80 144.70 L471.00 146.90 L473.20 144.70" fill="none" stroke="#e0e0e0" stroke-width="0.9" stroke-linecap="round" stroke-linejoin="round"/><path d="M532.50 177.20 L534.30 179.10 L536.10 177.20" fill="none" stroke="#d0d0d0" stroke-width="0.8" stroke-linecap="round" stroke-linejoin="round"/><path d="M468.80 358.20 L471.00 360.40 L473.20 358.20" fill="none" stroke="#e0e0e0" stroke-width="0.9" stroke-linecap="round" stroke-linejoin="round"/><path d="M468.80 413.40 L471.00 415.60 L473.20 413.40" fill="none" stroke="#e0e0e0" stroke-width="0.9" stroke-linecap="round" stroke-linejoin="round"/><path d="M605.20 204.35 L607.40 206.55 L609.60 204.35" fill="none" stroke="#e0e0e0" stroke-width="0.9" stroke-linecap="round" stroke-linejoin="round"/><g transform="translate(667.90,201.30)" fill="#e0e0e0"><rect x="1.2" y="-0.4" width="4.6" height="3.3" rx="0.9"/><rect x="2.1" y="0.9" width="2.8" height="0.6" fill="#555"/><rect x="0.2" y="3.9" width="5.4" height="3.2" rx="0.5"/><path d="M6.2 0.8H7.6V5.6H5.8" fill="none" stroke="#d8d8d8" stroke-width="0.6"/></g><g><circle cx="610.90" cy="276.90" r="3.9" fill="#ececec"/><path d="M611.20 276.60 L611.20 273.70 A3.2 3.2 0 0 1 614.10 276.60Z M610.60 277.20 L610.60 280.10 A3.2 3.2 0 0 1 607.70 277.20Z" fill="#252525"/></g><path d="M617.10 276.35 L618.90 278.25 L620.70 276.35" fill="none" stroke="#d0d0d0" stroke-width="0.8" stroke-linecap="round" stroke-linejoin="round"/><path d="M664.60 274.00 Q666.90 274.00 668.30 273.00 Q669.70 274.00 672.00 274.00 V277.30 C672.00 279.60 670.10 280.60 668.30 281.30 C666.50 280.60 664.60 279.60 664.60 277.30Z" fill="none" stroke="#9a9a9a" stroke-width="0.85"/><path d="M735.10 38.80 L737.30 41.00 L739.50 38.80" fill="none" stroke="#e0e0e0" stroke-width="0.9" stroke-linecap="round" stroke-linejoin="round"/><g transform="translate(737.60,81.10)"><rect x="0.45" y="0.45" width="7.4" height="7.1" fill="#1a1a1a" stroke="#ececec" stroke-width="0.9"/><path d="M0.9 7.1 L0.9 5.6 L2.9 3.0 L4.5 5.2 L5.4 4.3 L7.4 7.1Z" fill="#ececec"/><circle cx="5.9" cy="2.3" r="0.85" fill="#ececec"/></g><path d="M746.60 84.40 L748.20 86.20 L749.80 84.40" fill="none" stroke="#d0d0d0" stroke-width="0.8" stroke-linecap="round" stroke-linejoin="round"/><path d="M819.10 82.10 Q821.40 82.10 822.80 81.10 Q824.20 82.10 826.50 82.10 V85.40 C826.50 87.70 824.60 88.70 822.80 89.40 C821.00 88.70 819.10 87.70 819.10 85.40Z" fill="none" stroke="#a0a0a0" stroke-width="0.85"/><g fill="none" stroke="#e0e0e0" stroke-width="0.8"><path d="M831.50 83.40 V88.20 H836.10"/><path d="M833.30 81.80 H836.30 L837.90 83.40 V86.60 H833.30Z"/></g><path d="M843.20 82.00 H846.20 L847.00 83.00 H850.40 V88.20 H843.20Z" fill="#e6e6e6"/><path d="M843.20 84.10 H850.40" stroke="#545454" stroke-width="0.6"/><path d="M856.60 82.80 L861.00 87.20 M861.00 82.80 L856.60 87.20" stroke="#d8d8d8" stroke-width="0.9"/><path d="M858.30 99.00 L860.10 100.90 L861.90 99.00" fill="none" stroke="#d0d0d0" stroke-width="0.8" stroke-linecap="round" stroke-linejoin="round"/><path d="M858.30 113.30 L860.10 115.20 L861.90 113.30" fill="none" stroke="#d0d0d0" stroke-width="0.8" stroke-linecap="round" stroke-linejoin="round"/><path d="M858.30 128.25 L860.10 130.15 L861.90 128.25" fill="none" stroke="#d0d0d0" stroke-width="0.8" stroke-linecap="round" stroke-linejoin="round"/><path d="M858.30 143.35 L860.10 145.25 L861.90 143.35" fill="none" stroke="#d0d0d0" stroke-width="0.8" stroke-linecap="round" stroke-linejoin="round"/><path d="M858.30 158.40 L860.10 160.30 L861.90 158.40" fill="none" stroke="#d0d0d0" stroke-width="0.8" stroke-linecap="round" stroke-linejoin="round"/><path d="M858.30 173.50 L860.10 175.40 L861.90 173.50" fill="none" stroke="#d0d0d0" stroke-width="0.8" stroke-linecap="round" stroke-linejoin="round"/><path d="M735.10 216.10 L737.30 218.30 L739.50 216.10" fill="none" stroke="#e0e0e0" stroke-width="0.9" stroke-linecap="round" stroke-linejoin="round"/><g transform="translate(737.60,258.20)"><rect x="0.45" y="0.45" width="7.4" height="7.1" fill="#1a1a1a" stroke="#ececec" stroke-width="0.9"/><path d="M0.9 7.1 L0.9 5.6 L2.9 3.0 L4.5 5.2 L5.4 4.3 L7.4 7.1Z" fill="#ececec"/><circle cx="5.9" cy="2.3" r="0.85" fill="#ececec"/></g><path d="M746.60 261.50 L748.20 263.30 L749.80 261.50" fill="none" stroke="#d0d0d0" stroke-width="0.8" stroke-linecap="round" stroke-linejoin="round"/><path d="M819.10 259.20 Q821.40 259.20 822.80 258.20 Q824.20 259.20 826.50 259.20 V262.50 C826.50 264.80 824.60 265.80 822.80 266.50 C821.00 265.80 819.10 264.80 819.10 262.50Z" fill="none" stroke="#a0a0a0" stroke-width="0.85"/><g fill="none" stroke="#e0e0e0" stroke-width="0.8"><path d="M831.50 260.50 V265.30 H836.10"/><path d="M833.30 258.90 H836.30 L837.90 260.50 V263.70 H833.30Z"/></g><path d="M843.20 259.10 H846.20 L847.00 260.10 H850.40 V265.30 H843.20Z" fill="#e6e6e6"/><path d="M843.20 261.20 H850.40" stroke="#545454" stroke-width="0.6"/><path d="M856.60 259.90 L861.00 264.30 M861.00 259.90 L856.60 264.30" stroke="#d8d8d8" stroke-width="0.9"/><path d="M858.30 276.40 L860.10 278.30 L861.90 276.40" fill="none" stroke="#d0d0d0" stroke-width="0.8" stroke-linecap="round" stroke-linejoin="round"/><path d="M858.30 291.25 L860.10 293.15 L861.90 291.25" fill="none" stroke="#d0d0d0" stroke-width="0.8" stroke-linecap="round" stroke-linejoin="round"/><path d="M858.30 306.10 L860.10 308.00 L861.90 306.10" fill="none" stroke="#d0d0d0" stroke-width="0.8" stroke-linecap="round" stroke-linejoin="round"/><path d="M858.30 321.20 L860.10 323.10 L861.90 321.20" fill="none" stroke="#d0d0d0" stroke-width="0.8" stroke-linecap="round" stroke-linejoin="round"/><path d="M858.30 336.00 L860.10 337.90 L861.90 336.00" fill="none" stroke="#d0d0d0" stroke-width="0.8" stroke-linecap="round" stroke-linejoin="round"/><path d="M858.30 350.30 L860.10 352.20 L861.90 350.30" fill="none" stroke="#d0d0d0" stroke-width="0.8" stroke-linecap="round" stroke-linejoin="round"/><path d="M936.60 38.95 L938.80 41.15 L941.00 38.95" fill="none" stroke="#e0e0e0" stroke-width="0.9" stroke-linecap="round" stroke-linejoin="round"/><path d="M1000.60 71.40 L1002.40 73.30 L1004.20 71.40" fill="none" stroke="#d0d0d0" stroke-width="0.8" stroke-linecap="round" stroke-linejoin="round"/><path d="M1000.60 86.15 L1002.40 88.05 L1004.20 86.15" fill="none" stroke="#d0d0d0" stroke-width="0.8" stroke-linecap="round" stroke-linejoin="round"/><path d="M938.40 115.80 L940.40 118.20 L943.90 113.30" fill="none" stroke="#fff" stroke-width="1.15" stroke-linecap="round" stroke-linejoin="round"/><path d="M936.60 180.65 L938.80 182.85 L941.00 180.65" fill="none" stroke="#e0e0e0" stroke-width="0.9" stroke-linecap="round" stroke-linejoin="round"/><path d="M1000.60 213.10 L1002.40 215.00 L1004.20 213.10" fill="none" stroke="#d0d0d0" stroke-width="0.8" stroke-linecap="round" stroke-linejoin="round"/><path d="M1000.60 227.85 L1002.40 229.75 L1004.20 227.85" fill="none" stroke="#d0d0d0" stroke-width="0.8" stroke-linecap="round" stroke-linejoin="round"/><path d="M938.40 257.50 L940.40 259.90 L943.90 255.00" fill="none" stroke="#fff" stroke-width="1.15" stroke-linecap="round" stroke-linejoin="round"/><path d="M1043.60 50.15 L1045.80 52.35 L1048.00 50.15" fill="none" stroke="#e0e0e0" stroke-width="0.9" stroke-linecap="round" stroke-linejoin="round"/><path d="M1107.60 83.60 L1109.40 85.50 L1111.20 83.60" fill="none" stroke="#d0d0d0" stroke-width="0.8" stroke-linecap="round" stroke-linejoin="round"/><path d="M1107.60 98.35 L1109.40 100.25 L1111.20 98.35" fill="none" stroke="#d0d0d0" stroke-width="0.8" stroke-linecap="round" stroke-linejoin="round"/><path d="M1045.40 128.00 L1047.40 130.40 L1050.90 125.50" fill="none" stroke="#fff" stroke-width="1.15" stroke-linecap="round" stroke-linejoin="round"/><path d="M1179.20 192.50 L1181.40 194.70 L1183.60 192.50" fill="none" stroke="#e0e0e0" stroke-width="0.9" stroke-linecap="round" stroke-linejoin="round"/><g transform="translate(1242.00,189.60)" fill="#e0e0e0"><rect x="1.2" y="-0.4" width="4.6" height="3.3" rx="0.9"/><rect x="2.1" y="0.9" width="2.8" height="0.6" fill="#555"/><rect x="0.2" y="3.9" width="5.4" height="3.2" rx="0.5"/><path d="M6.2 0.8H7.6V5.6H5.8" fill="none" stroke="#d8d8d8" stroke-width="0.6"/></g><g><circle cx="1185.90" cy="226.00" r="3.9" fill="#ececec"/><path d="M1186.20 225.70 L1186.20 222.80 A3.2 3.2 0 0 1 1189.10 225.70Z M1185.60 226.30 L1185.60 229.20 A3.2 3.2 0 0 1 1182.70 226.30Z" fill="#252525"/></g><path d="M1192.10 225.45 L1193.90 227.35 L1195.70 225.45" fill="none" stroke="#d0d0d0" stroke-width="0.8" stroke-linecap="round" stroke-linejoin="round"/><path d="M1239.40 223.10 Q1241.70 223.10 1243.10 222.10 Q1244.50 223.10 1246.80 223.10 V226.40 C1246.80 228.70 1244.90 229.70 1243.10 230.40 C1241.30 229.70 1239.40 228.70 1239.40 226.40Z" fill="none" stroke="#9a9a9a" stroke-width="0.85"/><path d="M1292.40 180.70 L1294.60 182.90 L1296.80 180.70" fill="none" stroke="#e0e0e0" stroke-width="0.9" stroke-linecap="round" stroke-linejoin="round"/><path d="M1355.50 195.15 L1357.30 197.05 L1359.10 195.15" fill="none" stroke="#d0d0d0" stroke-width="0.8" stroke-linecap="round" stroke-linejoin="round"/><circle cx="427.00" cy="193.20" r="2.45" fill="#6363c7" stroke="#141414" stroke-width="0.7"/><circle cx="545.10" cy="160.40" r="2.45" fill="#6363c7" stroke="#141414" stroke-width="0.7"/><circle cx="462.20" cy="193.10" r="2.45" fill="#6363c7" stroke="#141414" stroke-width="0.7"/><circle cx="462.20" cy="205.80" r="2.45" fill="#6363c7" stroke="#141414" stroke-width="0.7"/><circle cx="462.20" cy="254.70" r="2.45" fill="#6363c7" stroke="#141414" stroke-width="0.7"/><circle cx="462.20" cy="303.20" r="2.45" fill="#6363c7" stroke="#141414" stroke-width="0.7"/><circle cx="545.10" cy="373.70" r="2.45" fill="#a1a1a1" stroke="#141414" stroke-width="0.7"/><circle cx="545.10" cy="428.70" r="2.45" fill="#a1a1a1" stroke="#141414" stroke-width="0.7"/><circle cx="681.10" cy="219.90" r="2.45" fill="#6363c7" stroke="#141414" stroke-width="0.7"/><circle cx="681.10" cy="233.00" r="2.45" fill="#6363c7" stroke="#141414" stroke-width="0.7"/><circle cx="681.10" cy="245.70" r="2.45" fill="#c7c729" stroke="#141414" stroke-width="0.7"/><circle cx="681.10" cy="258.60" r="2.45" fill="#c7c729" stroke="#141414" stroke-width="0.7"/><circle cx="598.70" cy="291.10" r="2.45" fill="#6363c7" stroke="#141414" stroke-width="0.7"/><circle cx="598.70" cy="304.30" r="2.45" fill="#a1a1a1" stroke="#141414" stroke-width="0.7"/><circle cx="598.70" cy="317.50" r="2.45" fill="#a1a1a1" stroke="#141414" stroke-width="0.7"/><circle cx="870.50" cy="53.90" r="2.45" fill="#c7c729" stroke="#141414" stroke-width="0.7"/><circle cx="870.50" cy="66.90" r="2.45" fill="#a1a1a1" stroke="#141414" stroke-width="0.7"/><circle cx="728.60" cy="188.20" r="2.45" fill="#6363c7" stroke="#141414" stroke-width="0.7"/><circle cx="870.50" cy="231.50" r="2.45" fill="#c7c729" stroke="#141414" stroke-width="0.7"/><circle cx="870.50" cy="244.50" r="2.45" fill="#a1a1a1" stroke="#141414" stroke-width="0.7"/><circle cx="728.60" cy="365.80" r="2.45" fill="#6363c7" stroke="#141414" stroke-width="0.7"/><circle cx="1012.60" cy="54.00" r="2.45" fill="#c7c729" stroke="#141414" stroke-width="0.7"/><circle cx="930.10" cy="130.80" r="2.45" fill="#a1a1a1" stroke="#141414" stroke-width="0.7"/><circle cx="930.10" cy="143.80" r="2.45" fill="#c7c729" stroke="#141414" stroke-width="0.7"/><circle cx="930.10" cy="156.70" r="2.45" fill="#c7c729" stroke="#141414" stroke-width="0.7"/><circle cx="1012.60" cy="195.70" r="2.45" fill="#c7c729" stroke="#141414" stroke-width="0.7"/><circle cx="930.10" cy="272.50" r="2.45" fill="#a1a1a1" stroke="#141414" stroke-width="0.7"/><circle cx="930.10" cy="285.50" r="2.45" fill="#c7c729" stroke="#141414" stroke-width="0.7"/><circle cx="930.10" cy="298.40" r="2.45" fill="#c7c729" stroke="#141414" stroke-width="0.7"/><circle cx="1119.60" cy="65.80" r="2.45" fill="#c7c729" stroke="#141414" stroke-width="0.7"/><circle cx="1037.10" cy="143.00" r="2.45" fill="#a1a1a1" stroke="#141414" stroke-width="0.7"/><circle cx="1037.10" cy="156.00" r="2.45" fill="#c7c729" stroke="#141414" stroke-width="0.7"/><circle cx="1037.10" cy="168.90" r="2.45" fill="#c7c729" stroke="#141414" stroke-width="0.7"/><circle cx="1255.20" cy="207.90" r="2.45" fill="#63c763" stroke="#141414" stroke-width="0.7"/><circle cx="1172.70" cy="240.50" r="2.45" fill="#c7c729" stroke="#141414" stroke-width="0.7"/><circle cx="1172.70" cy="253.50" r="2.45" fill="#a1a1a1" stroke="#141414" stroke-width="0.7"/><circle cx="1172.70" cy="266.50" r="2.45" fill="#a1a1a1" stroke="#141414" stroke-width="0.7"/><circle cx="1172.70" cy="279.50" r="2.45" fill="#a1a1a1" stroke="#141414" stroke-width="0.7"/><circle cx="1172.70" cy="292.50" r="2.45" fill="#a1a1a1" stroke="#141414" stroke-width="0.7"/><circle cx="1172.70" cy="305.50" r="2.45" fill="#a1a1a1" stroke="#141414" stroke-width="0.7"/><circle cx="1285.80" cy="210.80" r="2.45" fill="#63c763" stroke="#141414" stroke-width="0.7"/><circle cx="1285.80" cy="223.70" r="2.45" fill="#63c763" stroke="#141414" stroke-width="0.7"/><circle cx="1285.80" cy="236.80" r="2.45" fill="#6363c7" stroke="#141414" stroke-width="0.7"/><rect x="892.70" y="446.10" width="3.4" height="3.4" rx="0.8" fill="#a1a1a1" stroke="#161616" stroke-width="0.7"/><rect x="892.70" y="469.60" width="3.4" height="3.4" rx="0.8" fill="#a1a1a1" stroke="#161616" stroke-width="0.7"/></svg>
<div style="position:absolute;left:311px;top:0;width:3px;height:482px;background:#161616;"></div>
<div id="left"><svg class="l" width="311" height="482" shape-rendering="auto"><defs>
<clipPath id="cc"><circle cx="156.4" cy="252.6" r="100.9"/></clipPath>
<pattern id="stL" x="0" y="152.2" width="20" height="2.3" patternUnits="userSpaceOnUse"><rect width="20" height="2.3" fill="#3d9b78"/><rect width="20" height="1.15" fill="#b85c80"/></pattern>
<pattern id="stR" x="0" y="152.2" width="20" height="2.3" patternUnits="userSpaceOnUse"><rect width="20" height="2.3" fill="#7b8c0a"/><rect width="20" height="1.15" fill="#7b68ee"/></pattern>
<linearGradient id="b1" gradientUnits="userSpaceOnUse" x1="71.9" x2="79.3" spreadMethod="repeat"><stop offset="0" stop-color="#000"/><stop offset=".14" stop-color="#000"/><stop offset=".33" stop-color="#fff"/><stop offset=".67" stop-color="#fff"/><stop offset=".86" stop-color="#000"/><stop offset="1" stop-color="#000"/></linearGradient>
<linearGradient id="b2" gradientUnits="userSpaceOnUse" x1="107" x2="110.3" spreadMethod="repeat"><stop offset="0" stop-color="#111"/><stop offset=".5" stop-color="#f0f0f0"/><stop offset="1" stop-color="#111"/></linearGradient>
<linearGradient id="b3" gradientUnits="userSpaceOnUse" x1="141" x2="143" spreadMethod="repeat"><stop offset="0" stop-color="#111"/><stop offset=".5" stop-color="#777"/><stop offset="1" stop-color="#111"/></linearGradient>
<linearGradient id="b4" gradientUnits="userSpaceOnUse" x1="164.2" x2="166.3" spreadMethod="repeat"><stop offset="0" stop-color="#222"/><stop offset=".5" stop-color="#8a8a8a"/><stop offset="1" stop-color="#222"/></linearGradient>
<linearGradient id="b5" gradientUnits="userSpaceOnUse" x1="181.6" x2="184.9" spreadMethod="repeat"><stop offset="0" stop-color="#151515"/><stop offset=".5" stop-color="#f0f0f0"/><stop offset="1" stop-color="#151515"/></linearGradient>
<linearGradient id="b6" gradientUnits="userSpaceOnUse" x1="210.5" x2="216.4" spreadMethod="repeat"><stop offset="0" stop-color="#000"/><stop offset=".25" stop-color="#fff"/><stop offset=".5" stop-color="#333"/><stop offset=".75" stop-color="#bbb"/><stop offset="1" stop-color="#000"/></linearGradient>
<linearGradient id="b7" gradientUnits="userSpaceOnUse" x1="148.6" x2="150.5" spreadMethod="repeat"><stop offset="0" stop-color="#000"/><stop offset=".5" stop-color="#eee"/><stop offset="1" stop-color="#000"/></linearGradient>
</defs><rect x="3.0999999999999996" y="137.79999999999998" width="306.6" height="230.2" fill="#1e1e1e"/><rect x="3.9" y="138.6" width="305.0" height="228.6" fill="#fff"/><rect x="15.05" y="144.35" width="282.54" height="215.79999999999998" fill="#7b7b7b"/><rect x="15.05" y="152" width="16.6" height="200" fill="#3d9b78"/><rect x="15.05" y="152" width="16.6" height="1" fill="#b85c80"/><rect x="15.05" y="154" width="16.6" height="1" fill="#b85c80"/><rect x="15.05" y="155" width="16.6" height="1" fill="#b85c80"/><rect x="15.05" y="157" width="16.6" height="1" fill="#b85c80"/><rect x="15.05" y="160" width="16.6" height="1" fill="#b85c80"/><rect x="15.05" y="162" width="16.6" height="1" fill="#b85c80"/><rect x="15.05" y="163" width="16.6" height="1" fill="#b85c80"/><rect x="15.05" y="165" width="16.6" height="1" fill="#b85c80"/><rect x="15.05" y="168" width="16.6" height="1" fill="#b85c80"/><rect x="15.05" y="170" width="16.6" height="1" fill="#b85c80"/><rect x="15.05" y="171" width="16.6" height="1" fill="#b85c80"/><rect x="15.05" y="173" width="16.6" height="1" fill="#b85c80"/><rect x="15.05" y="176" width="16.6" height="1" fill="#b85c80"/><rect x="15.05" y="178" width="16.6" height="1" fill="#b85c80"/><rect x="15.05" y="179" width="16.6" height="1" fill="#b85c80"/><rect x="15.05" y="181" width="16.6" height="1" fill="#b85c80"/><rect x="15.05" y="184" width="16.6" height="1" fill="#b85c80"/><rect x="15.05" y="186" width="16.6" height="1" fill="#b85c80"/><rect x="15.05" y="187" width="16.6" height="1" fill="#b85c80"/><rect x="15.05" y="189" width="16.6" height="1" fill="#b85c80"/><rect x="15.05" y="192" width="16.6" height="1" fill="#b85c80"/><rect x="15.05" y="194" width="16.6" height="1" fill="#b85c80"/><rect x="15.05" y="195" width="16.6" height="1" fill="#b85c80"/><rect x="15.05" y="197" width="16.6" height="1" fill="#b85c80"/><rect x="15.05" y="200" width="16.6" height="1" fill="#b85c80"/><rect x="15.05" y="203" width="16.6" height="1" fill="#b85c80"/><rect x="15.05" y="205" width="16.6" height="1" fill="#b85c80"/><rect x="15.05" y="206" width="16.6" height="1" fill="#b85c80"/><rect x="15.05" y="208" width="16.6" height="1" fill="#b85c80"/><rect x="15.05" y="211" width="16.6" height="1" fill="#b85c80"/><rect x="15.05" y="213" width="16.6" height="1" fill="#b85c80"/><rect x="15.05" y="214" width="16.6" height="1" fill="#b85c80"/><rect x="15.05" y="216" width="16.6" height="1" fill="#b85c80"/><rect x="15.05" y="219" width="16.6" height="1" fill="#b85c80"/><rect x="15.05" y="221" width="16.6" height="1" fill="#b85c80"/><rect x="15.05" y="222" width="16.6" height="1" fill="#b85c80"/><rect x="15.05" y="224" width="16.6" height="1" fill="#b85c80"/><rect x="15.05" y="227" width="16.6" height="1" fill="#b85c80"/><rect x="15.05" y="229" width="16.6" height="1" fill="#b85c80"/><rect x="15.05" y="230" width="16.6" height="1" fill="#b85c80"/><rect x="15.05" y="232" width="16.6" height="1" fill="#b85c80"/><rect x="15.05" y="235" width="16.6" height="1" fill="#b85c80"/><rect x="15.05" y="237" width="16.6" height="1" fill="#b85c80"/><rect x="15.05" y="238" width="16.6" height="1" fill="#b85c80"/><rect x="15.05" y="240" width="16.6" height="1" fill="#b85c80"/><rect x="15.05" y="243" width="16.6" height="1" fill="#b85c80"/><rect x="15.05" y="245" width="16.6" height="1" fill="#b85c80"/><rect x="15.05" y="246" width="16.6" height="1" fill="#b85c80"/><rect x="15.05" y="248" width="16.6" height="1" fill="#b85c80"/><rect x="15.05" y="251" width="16.6" height="1" fill="#b85c80"/><rect x="15.05" y="253" width="16.6" height="1" fill="#b85c80"/><rect x="15.05" y="254" width="16.6" height="1" fill="#b85c80"/><rect x="15.05" y="256" width="16.6" height="1" fill="#b85c80"/><rect x="15.05" y="259" width="16.6" height="1" fill="#b85c80"/><rect x="15.05" y="261" width="16.6" height="1" fill="#b85c80"/><rect x="15.05" y="262" width="16.6" height="1" fill="#b85c80"/><rect x="15.05" y="264" width="16.6" height="1" fill="#b85c80"/><rect x="15.05" y="265" width="16.6" height="1" fill="#b85c80"/><rect x="15.05" y="267" width="16.6" height="1" fill="#b85c80"/><rect x="15.05" y="270" width="16.6" height="1" fill="#b85c80"/><rect x="15.05" y="272" width="16.6" height="1" fill="#b85c80"/><rect x="15.05" y="273" width="16.6" height="1" fill="#b85c80"/><rect x="15.05" y="275" width="16.6" height="1" fill="#b85c80"/><rect x="15.05" y="278" width="16.6" height="1" fill="#b85c80"/><rect x="15.05" y="280" width="16.6" height="1" fill="#b85c80"/><rect x="15.05" y="281" width="16.6" height="1" fill="#b85c80"/><rect x="15.05" y="283" width="16.6" height="1" fill="#b85c80"/><rect x="15.05" y="286" width="16.6" height="1" fill="#b85c80"/><rect x="15.05" y="288" width="16.6" height="1" fill="#b85c80"/><rect x="15.05" y="289" width="16.6" height="1" fill="#b85c80"/><rect x="15.05" y="291" width="16.6" height="1" fill="#b85c80"/><rect x="15.05" y="294" width="16.6" height="1" fill="#b85c80"/><rect x="15.05" y="296" width="16.6" height="1" fill="#b85c80"/><rect x="15.05" y="297" width="16.6" height="1" fill="#b85c80"/><rect x="15.05" y="299" width="16.6" height="1" fill="#b85c80"/><rect x="15.05" y="302" width="16.6" height="1" fill="#b85c80"/><rect x="15.05" y="304" width="16.6" height="1" fill="#b85c80"/><rect x="15.05" y="305" width="16.6" height="1" fill="#b85c80"/><rect x="15.05" y="307" width="16.6" height="1" fill="#b85c80"/><rect x="15.05" y="310" width="16.6" height="1" fill="#b85c80"/><rect x="15.05" y="312" width="16.6" height="1" fill="#b85c80"/><rect x="15.05" y="313" width="16.6" height="1" fill="#b85c80"/><rect x="15.05" y="315" width="16.6" height="1" fill="#b85c80"/><rect x="15.05" y="318" width="16.6" height="1" fill="#b85c80"/><rect x="15.05" y="320" width="16.6" height="1" fill="#b85c80"/><rect x="15.05" y="321" width="16.6" height="1" fill="#b85c80"/><rect x="15.05" y="323" width="16.6" height="1" fill="#b85c80"/><rect x="15.05" y="326" width="16.6" height="1" fill="#b85c80"/><rect x="15.05" y="328" width="16.6" height="1" fill="#b85c80"/><rect x="15.05" y="329" width="16.6" height="1" fill="#b85c80"/><rect x="15.05" y="331" width="16.6" height="1" fill="#b85c80"/><rect x="15.05" y="332" width="16.6" height="1" fill="#b85c80"/><rect x="15.05" y="334" width="16.6" height="1" fill="#b85c80"/><rect x="15.05" y="337" width="16.6" height="1" fill="#b85c80"/><rect x="15.05" y="339" width="16.6" height="1" fill="#b85c80"/><rect x="15.05" y="340" width="16.6" height="1" fill="#b85c80"/><rect x="15.05" y="342" width="16.6" height="1" fill="#b85c80"/><rect x="15.05" y="345" width="16.6" height="1" fill="#b85c80"/><rect x="15.05" y="347" width="16.6" height="1" fill="#b85c80"/><rect x="15.05" y="348" width="16.6" height="1" fill="#b85c80"/><rect x="15.05" y="350" width="16.6" height="1" fill="#b85c80"/><rect x="280.97" y="152" width="16.6" height="200" fill="#7b8c0a"/><rect x="280.97" y="152" width="16.6" height="1" fill="#7b68ee"/><rect x="280.97" y="154" width="16.6" height="1" fill="#7b68ee"/><rect x="280.97" y="155" width="16.6" height="1" fill="#7b68ee"/><rect x="280.97" y="157" width="16.6" height="1" fill="#7b68ee"/><rect x="280.97" y="160" width="16.6" height="1" fill="#7b68ee"/><rect x="280.97" y="162" width="16.6" height="1" fill="#7b68ee"/><rect x="280.97" y="163" width="16.6" height="1" fill="#7b68ee"/><rect x="280.97" y="165" width="16.6" height="1" fill="#7b68ee"/><rect x="280.97" y="168" width="16.6" height="1" fill="#7b68ee"/><rect x="280.97" y="170" width="16.6" height="1" fill="#7b68ee"/><rect x="280.97" y="171" width="16.6" height="1" fill="#7b68ee"/><rect x="280.97" y="173" width="16.6" height="1" fill="#7b68ee"/><rect x="280.97" y="176" width="16.6" height="1" fill="#7b68ee"/><rect x="280.97" y="178" width="16.6" height="1" fill="#7b68ee"/><rect x="280.97" y="179" width="16.6" height="1" fill="#7b68ee"/><rect x="280.97" y="181" width="16.6" height="1" fill="#7b68ee"/><rect x="280.97" y="184" width="16.6" height="1" fill="#7b68ee"/><rect x="280.97" y="186" width="16.6" height="1" fill="#7b68ee"/><rect x="280.97" y="187" width="16.6" height="1" fill="#7b68ee"/><rect x="280.97" y="189" width="16.6" height="1" fill="#7b68ee"/><rect x="280.97" y="192" width="16.6" height="1" fill="#7b68ee"/><rect x="280.97" y="194" width="16.6" height="1" fill="#7b68ee"/><rect x="280.97" y="195" width="16.6" height="1" fill="#7b68ee"/><rect x="280.97" y="197" width="16.6" height="1" fill="#7b68ee"/><rect x="280.97" y="200" width="16.6" height="1" fill="#7b68ee"/><rect x="280.97" y="203" width="16.6" height="1" fill="#7b68ee"/><rect x="280.97" y="205" width="16.6" height="1" fill="#7b68ee"/><rect x="280.97" y="206" width="16.6" height="1" fill="#7b68ee"/><rect x="280.97" y="208" width="16.6" height="1" fill="#7b68ee"/><rect x="280.97" y="211" width="16.6" height="1" fill="#7b68ee"/><rect x="280.97" y="213" width="16.6" height="1" fill="#7b68ee"/><rect x="280.97" y="214" width="16.6" height="1" fill="#7b68ee"/><rect x="280.97" y="216" width="16.6" height="1" fill="#7b68ee"/><rect x="280.97" y="219" width="16.6" height="1" fill="#7b68ee"/><rect x="280.97" y="221" width="16.6" height="1" fill="#7b68ee"/><rect x="280.97" y="222" width="16.6" height="1" fill="#7b68ee"/><rect x="280.97" y="224" width="16.6" height="1" fill="#7b68ee"/><rect x="280.97" y="227" width="16.6" height="1" fill="#7b68ee"/><rect x="280.97" y="229" width="16.6" height="1" fill="#7b68ee"/><rect x="280.97" y="230" width="16.6" height="1" fill="#7b68ee"/><rect x="280.97" y="232" width="16.6" height="1" fill="#7b68ee"/><rect x="280.97" y="235" width="16.6" height="1" fill="#7b68ee"/><rect x="280.97" y="237" width="16.6" height="1" fill="#7b68ee"/><rect x="280.97" y="238" width="16.6" height="1" fill="#7b68ee"/><rect x="280.97" y="240" width="16.6" height="1" fill="#7b68ee"/><rect x="280.97" y="243" width="16.6" height="1" fill="#7b68ee"/><rect x="280.97" y="245" width="16.6" height="1" fill="#7b68ee"/><rect x="280.97" y="246" width="16.6" height="1" fill="#7b68ee"/><rect x="280.97" y="248" width="16.6" height="1" fill="#7b68ee"/><rect x="280.97" y="251" width="16.6" height="1" fill="#7b68ee"/><rect x="280.97" y="253" width="16.6" height="1" fill="#7b68ee"/><rect x="280.97" y="254" width="16.6" height="1" fill="#7b68ee"/><rect x="280.97" y="256" width="16.6" height="1" fill="#7b68ee"/><rect x="280.97" y="259" width="16.6" height="1" fill="#7b68ee"/><rect x="280.97" y="261" width="16.6" height="1" fill="#7b68ee"/><rect x="280.97" y="262" width="16.6" height="1" fill="#7b68ee"/><rect x="280.97" y="264" width="16.6" height="1" fill="#7b68ee"/><rect x="280.97" y="265" width="16.6" height="1" fill="#7b68ee"/><rect x="280.97" y="267" width="16.6" height="1" fill="#7b68ee"/><rect x="280.97" y="270" width="16.6" height="1" fill="#7b68ee"/><rect x="280.97" y="272" width="16.6" height="1" fill="#7b68ee"/><rect x="280.97" y="273" width="16.6" height="1" fill="#7b68ee"/><rect x="280.97" y="275" width="16.6" height="1" fill="#7b68ee"/><rect x="280.97" y="278" width="16.6" height="1" fill="#7b68ee"/><rect x="280.97" y="280" width="16.6" height="1" fill="#7b68ee"/><rect x="280.97" y="281" width="16.6" height="1" fill="#7b68ee"/><rect x="280.97" y="283" width="16.6" height="1" fill="#7b68ee"/><rect x="280.97" y="286" width="16.6" height="1" fill="#7b68ee"/><rect x="280.97" y="288" width="16.6" height="1" fill="#7b68ee"/><rect x="280.97" y="289" width="16.6" height="1" fill="#7b68ee"/><rect x="280.97" y="291" width="16.6" height="1" fill="#7b68ee"/><rect x="280.97" y="294" width="16.6" height="1" fill="#7b68ee"/><rect x="280.97" y="296" width="16.6" height="1" fill="#7b68ee"/><rect x="280.97" y="297" width="16.6" height="1" fill="#7b68ee"/><rect x="280.97" y="299" width="16.6" height="1" fill="#7b68ee"/><rect x="280.97" y="302" width="16.6" height="1" fill="#7b68ee"/><rect x="280.97" y="304" width="16.6" height="1" fill="#7b68ee"/><rect x="280.97" y="305" width="16.6" height="1" fill="#7b68ee"/><rect x="280.97" y="307" width="16.6" height="1" fill="#7b68ee"/><rect x="280.97" y="310" width="16.6" height="1" fill="#7b68ee"/><rect x="280.97" y="312" width="16.6" height="1" fill="#7b68ee"/><rect x="280.97" y="313" width="16.6" height="1" fill="#7b68ee"/><rect x="280.97" y="315" width="16.6" height="1" fill="#7b68ee"/><rect x="280.97" y="318" width="16.6" height="1" fill="#7b68ee"/><rect x="280.97" y="320" width="16.6" height="1" fill="#7b68ee"/><rect x="280.97" y="321" width="16.6" height="1" fill="#7b68ee"/><rect x="280.97" y="323" width="16.6" height="1" fill="#7b68ee"/><rect x="280.97" y="326" width="16.6" height="1" fill="#7b68ee"/><rect x="280.97" y="328" width="16.6" height="1" fill="#7b68ee"/><rect x="280.97" y="329" width="16.6" height="1" fill="#7b68ee"/><rect x="280.97" y="331" width="16.6" height="1" fill="#7b68ee"/><rect x="280.97" y="332" width="16.6" height="1" fill="#7b68ee"/><rect x="280.97" y="334" width="16.6" height="1" fill="#7b68ee"/><rect x="280.97" y="337" width="16.6" height="1" fill="#7b68ee"/><rect x="280.97" y="339" width="16.6" height="1" fill="#7b68ee"/><rect x="280.97" y="340" width="16.6" height="1" fill="#7b68ee"/><rect x="280.97" y="342" width="16.6" height="1" fill="#7b68ee"/><rect x="280.97" y="345" width="16.6" height="1" fill="#7b68ee"/><rect x="280.97" y="347" width="16.6" height="1" fill="#7b68ee"/><rect x="280.97" y="348" width="16.6" height="1" fill="#7b68ee"/><rect x="280.97" y="350" width="16.6" height="1" fill="#7b68ee"/><rect x="14.43" y="138.6" width="1.25" height="228.6" fill="#fff"/><rect x="31.05" y="138.6" width="1.25" height="228.6" fill="#fff"/><rect x="47.67" y="138.6" width="1.25" height="228.6" fill="#fff"/><rect x="64.28" y="138.6" width="1.25" height="228.6" fill="#fff"/><rect x="80.91" y="138.6" width="1.25" height="228.6" fill="#fff"/><rect x="97.53" y="138.6" width="1.25" height="228.6" fill="#fff"/><rect x="114.14" y="138.6" width="1.25" height="228.6" fill="#fff"/><rect x="130.77" y="138.6" width="1.25" height="228.6" fill="#fff"/><rect x="147.39" y="138.6" width="1.25" height="228.6" fill="#fff"/><rect x="164.01" y="138.6" width="1.25" height="228.6" fill="#fff"/><rect x="180.63" y="138.6" width="1.25" height="228.6" fill="#fff"/><rect x="197.25" y="138.6" width="1.25" height="228.6" fill="#fff"/><rect x="213.87" y="138.6" width="1.25" height="228.6" fill="#fff"/><rect x="230.49" y="138.6" width="1.25" height="228.6" fill="#fff"/><rect x="247.11" y="138.6" width="1.25" height="228.6" fill="#fff"/><rect x="263.73" y="138.6" width="1.25" height="228.6" fill="#fff"/><rect x="280.35" y="138.6" width="1.25" height="228.6" fill="#fff"/><rect x="296.97" y="138.6" width="1.25" height="228.6" fill="#fff"/><rect x="3.9" y="143.72" width="305.0" height="1.25" fill="#fff"/><rect x="3.9" y="160.32" width="305.0" height="1.25" fill="#fff"/><rect x="3.9" y="176.93" width="305.0" height="1.25" fill="#fff"/><rect x="3.9" y="193.53" width="305.0" height="1.25" fill="#fff"/><rect x="3.9" y="210.12" width="305.0" height="1.25" fill="#fff"/><rect x="3.9" y="226.72" width="305.0" height="1.25" fill="#fff"/><rect x="3.9" y="243.32" width="305.0" height="1.25" fill="#fff"/><rect x="3.9" y="259.93" width="305.0" height="1.25" fill="#fff"/><rect x="3.9" y="276.52" width="305.0" height="1.25" fill="#fff"/><rect x="3.9" y="293.12" width="305.0" height="1.25" fill="#fff"/><rect x="3.9" y="309.73" width="305.0" height="1.25" fill="#fff"/><rect x="3.9" y="326.33" width="305.0" height="1.25" fill="#fff"/><rect x="3.9" y="342.93" width="305.0" height="1.25" fill="#fff"/><rect x="3.9" y="359.52" width="305.0" height="1.25" fill="#fff"/><rect x="32.30" y="161.57" width="15.35" height="91.03" fill="#3d9b78"/><rect x="32.30" y="252.60" width="15.35" height="90.33" fill="#b85c80"/><rect x="48.92" y="161.57" width="15.35" height="31.95" fill="#5577d5"/><rect x="48.92" y="310.98" width="15.35" height="31.95" fill="#9b7520"/><rect x="264.98" y="161.57" width="15.35" height="91.03" fill="#7b8c0a"/><rect x="264.98" y="252.60" width="15.35" height="90.33" fill="#7b68ee"/><rect x="248.36" y="161.57" width="15.35" height="31.95" fill="#5577d5"/><rect x="248.36" y="310.98" width="15.35" height="31.95" fill="#9b7520"/><rect x="47.57" y="161.57" width="1.45" height="31.95" fill="#3d9b78"/><rect x="47.57" y="310.98" width="1.45" height="31.95" fill="#b85c80"/><rect x="263.62" y="161.57" width="1.45" height="31.95" fill="#7b8c0a"/><rect x="263.62" y="310.98" width="1.45" height="31.95" fill="#7b68ee"/><rect x="15.45" y="138.6" width="15.80" height="5.12" fill="#000"/><rect x="15.45" y="360.77" width="15.80" height="6.43" fill="#000"/><rect x="48.69" y="138.6" width="15.80" height="5.12" fill="#000"/><rect x="48.69" y="360.77" width="15.80" height="6.43" fill="#000"/><rect x="81.93" y="138.6" width="15.80" height="5.12" fill="#000"/><rect x="81.93" y="360.77" width="15.80" height="6.43" fill="#000"/><rect x="115.17" y="138.6" width="15.80" height="5.12" fill="#000"/><rect x="115.17" y="360.77" width="15.80" height="6.43" fill="#000"/><rect x="148.41" y="138.6" width="15.80" height="5.12" fill="#000"/><rect x="148.41" y="360.77" width="15.80" height="6.43" fill="#000"/><rect x="181.65" y="138.6" width="15.80" height="5.12" fill="#000"/><rect x="181.65" y="360.77" width="15.80" height="6.43" fill="#000"/><rect x="214.89" y="138.6" width="15.80" height="5.12" fill="#000"/><rect x="214.89" y="360.77" width="15.80" height="6.43" fill="#000"/><rect x="248.13" y="138.6" width="15.80" height="5.12" fill="#000"/><rect x="248.13" y="360.77" width="15.80" height="6.43" fill="#000"/><rect x="281.37" y="138.6" width="15.80" height="5.12" fill="#000"/><rect x="281.37" y="360.77" width="15.80" height="6.43" fill="#000"/><rect x="3.9" y="144.75" width="9.93" height="15.80" fill="#000"/><rect x="298.82" y="144.75" width="10.08" height="15.80" fill="#000"/><rect x="3.9" y="177.95" width="9.93" height="15.80" fill="#000"/><rect x="298.82" y="177.95" width="10.08" height="15.80" fill="#000"/><rect x="3.9" y="211.15" width="9.93" height="15.80" fill="#000"/><rect x="298.82" y="211.15" width="10.08" height="15.80" fill="#000"/><rect x="3.9" y="244.35" width="9.93" height="15.80" fill="#000"/><rect x="298.82" y="244.35" width="10.08" height="15.80" fill="#000"/><rect x="3.9" y="277.55" width="9.93" height="15.80" fill="#000"/><rect x="298.82" y="277.55" width="10.08" height="15.80" fill="#000"/><rect x="3.9" y="310.75" width="9.93" height="15.80" fill="#000"/><rect x="298.82" y="310.75" width="10.08" height="15.80" fill="#000"/><rect x="3.9" y="343.95" width="9.93" height="15.80" fill="#000"/><rect x="298.82" y="343.95" width="10.08" height="15.80" fill="#000"/><g clip-path="url(#cc)"><rect x="50" y="150" width="215" height="206" fill="#fff"/><rect x="123" y="161" width="67" height="15.6" fill="#000"/><rect x="50" y="177.3" width="56" height="17" fill="#000"/><rect x="207.3" y="177.3" width="60" height="17" fill="#000"/><rect x="114.2" y="177.3" width="1.4" height="17" fill="#000"/><rect x="50" y="194" width="215" height="17" fill="#000"/><rect x="51.45" y="194" width="11.3" height="17" fill="#c0c0c0"/><rect x="74.90" y="194" width="11.3" height="17" fill="#c0c0c0"/><rect x="98.35" y="194" width="11.3" height="17" fill="#c0c0c0"/><rect x="121.80" y="194" width="11.3" height="17" fill="#c0c0c0"/><rect x="145.25" y="194" width="11.3" height="17" fill="#c0c0c0"/><rect x="168.70" y="194" width="11.3" height="17" fill="#c0c0c0"/><rect x="192.15" y="194" width="11.3" height="17" fill="#c0c0c0"/><rect x="215.60" y="194" width="11.3" height="17" fill="#c0c0c0"/><rect x="239.05" y="194" width="11.3" height="17" fill="#c0c0c0"/><rect x="262.50" y="194" width="11.3" height="17" fill="#c0c0c0"/><rect x="50.00" y="210.8" width="39.80" height="33.4" fill="#c0c000"/><rect x="89.80" y="210.8" width="33.10" height="33.4" fill="#00c0c0"/><rect x="122.90" y="210.8" width="33.40" height="33.4" fill="#00c000"/><rect x="156.30" y="210.8" width="33.60" height="33.4" fill="#c000c0"/><rect x="189.90" y="210.8" width="33.10" height="33.4" fill="#c00000"/><rect x="223.00" y="210.8" width="42.00" height="33.4" fill="#0000c0"/><rect x="50" y="244" width="215" height="50.2" fill="#000"/><rect x="14.45" y="244" width="1.2" height="17" fill="#fff"/><rect x="31.07" y="244" width="1.2" height="17" fill="#fff"/><rect x="47.69" y="244" width="1.2" height="17" fill="#fff"/><rect x="64.31" y="244" width="1.2" height="17" fill="#fff"/><rect x="80.93" y="244" width="1.2" height="17" fill="#fff"/><rect x="97.55" y="244" width="1.2" height="17" fill="#fff"/><rect x="114.17" y="244" width="1.2" height="17" fill="#fff"/><rect x="130.79" y="244" width="1.2" height="17" fill="#fff"/><rect x="147.41" y="244" width="1.2" height="17" fill="#fff"/><rect x="164.03" y="244" width="1.2" height="17" fill="#fff"/><rect x="180.65" y="244" width="1.2" height="17" fill="#fff"/><rect x="197.27" y="244" width="1.2" height="17" fill="#fff"/><rect x="213.89" y="244" width="1.2" height="17" fill="#fff"/><rect x="230.51" y="244" width="1.2" height="17" fill="#fff"/><rect x="247.13" y="244" width="1.2" height="17" fill="#fff"/><rect x="263.75" y="244" width="1.2" height="17" fill="#fff"/><rect x="280.37" y="244" width="1.2" height="17" fill="#fff"/><rect x="296.99" y="244" width="1.2" height="17" fill="#fff"/><rect x="50" y="252.0" width="215" height="1.1" fill="#fff"/><rect x="73.3" y="261" width="33.9" height="33.2" fill="url(#b1)"/><rect x="107.2" y="261" width="34" height="33.2" fill="url(#b2)"/><rect x="141.2" y="261" width="7.4" height="33.2" fill="url(#b3)"/><rect x="164.2" y="261" width="17.4" height="33.2" fill="url(#b4)"/><rect x="181.6" y="261" width="28.9" height="33.2" fill="url(#b5)"/><rect x="210.5" y="261" width="29.7" height="33.2" fill="url(#b6)"/><rect x="148.6" y="226.6" width="15.6" height="51.3" fill="#000"/><rect x="148.6" y="277.9" width="15.6" height="16.3" fill="url(#b7)"/><rect x="155.9" y="226.6" width="1" height="50" fill="#fff"/><rect x="148.6" y="252.1" width="15.6" height="1" fill="#fff"/><rect x="50.00" y="294" width="39.80" height="16.9" fill="#000"/><rect x="89.80" y="294" width="33.10" height="16.9" fill="#333"/><rect x="122.90" y="294" width="33.40" height="16.9" fill="#666"/><rect x="156.30" y="294" width="33.60" height="16.9" fill="#999"/><rect x="189.90" y="294" width="33.10" height="16.9" fill="#ccc"/><rect x="223.00" y="294" width="42.00" height="16.9" fill="#fff"/><rect x="50" y="310.8" width="215" height="17.4" fill="#fff"/><rect x="106" y="310.8" width="100.8" height="17.4" fill="#000"/><rect x="113.8" y="310.8" width="2.1" height="17.4" fill="#fff"/><rect x="50" y="328.1" width="215" height="30" fill="#c0c000"/><rect x="149" y="328.1" width="15" height="30" fill="#c00000"/></g><circle cx="3.6" cy="367.3" r="10.3" fill="none" stroke="#fff" stroke-width="1.1"/><circle cx="3.6" cy="367.3" r="10.3" fill="none" stroke="#e01010" stroke-width="1.1" stroke-dasharray="4 4.1"/><path d="M3.5 372V388.5" stroke="#000" stroke-width="0.9"/><rect x="0" y="0" width="1" height="482" fill="#1c1c1c"/><rect x="-3" y="11.5" width="11" height="13.5" rx="2.5" fill="#2a2a2a"/><path d="M1.5 14.4 L5.3 17.8 L1.5 21.2" fill="none" stroke="#c8c8c8" stroke-width="1.2"/><rect x="303.3" y="10.9" width="12" height="13.7" rx="2.6" fill="#2c2c2c"/><path d="M309.6 14.3 L305.7 17.7 L309.6 21.1" fill="none" stroke="#c8c8c8" stroke-width="1.25"/><circle cx="288" cy="18.6" r="13.7" fill="#282828"/><circle cx="288" cy="48.6" r="13.7" fill="#282828"/><circle cx="289.8" cy="17.3" r="6.1" fill="#e6e6e6"/><path d="M285.8 21.3 L280.9 26.2" stroke="#e6e6e6" stroke-width="2.2" stroke-linecap="round"/><path d="M286.8 17.3H292.8M289.8 14.3V20.3" stroke="#222" stroke-width="1.1"/><path d="M283.2 50.6 C281.5 49.2 280 48.6 280.2 49.8 C281 51.6 283.4 54.6 285.6 56 C288.4 57.4 292.6 56.4 293.4 53 L295.2 46.8 C295.4 45.6 294.2 45.4 293.8 46.6 L292.7 50 L292.6 43.6 C292.6 42.3 291.1 42.3 291 43.6 L290.5 49.3 L289.6 42.4 C289.4 41.2 288 41.4 288.1 42.6 L288.3 49.5 L286.4 44 C285.9 42.8 284.6 43.4 285 44.6 L286.6 52.6 Z" fill="#e6e6e6"/></svg></div>
</div></body></html>
